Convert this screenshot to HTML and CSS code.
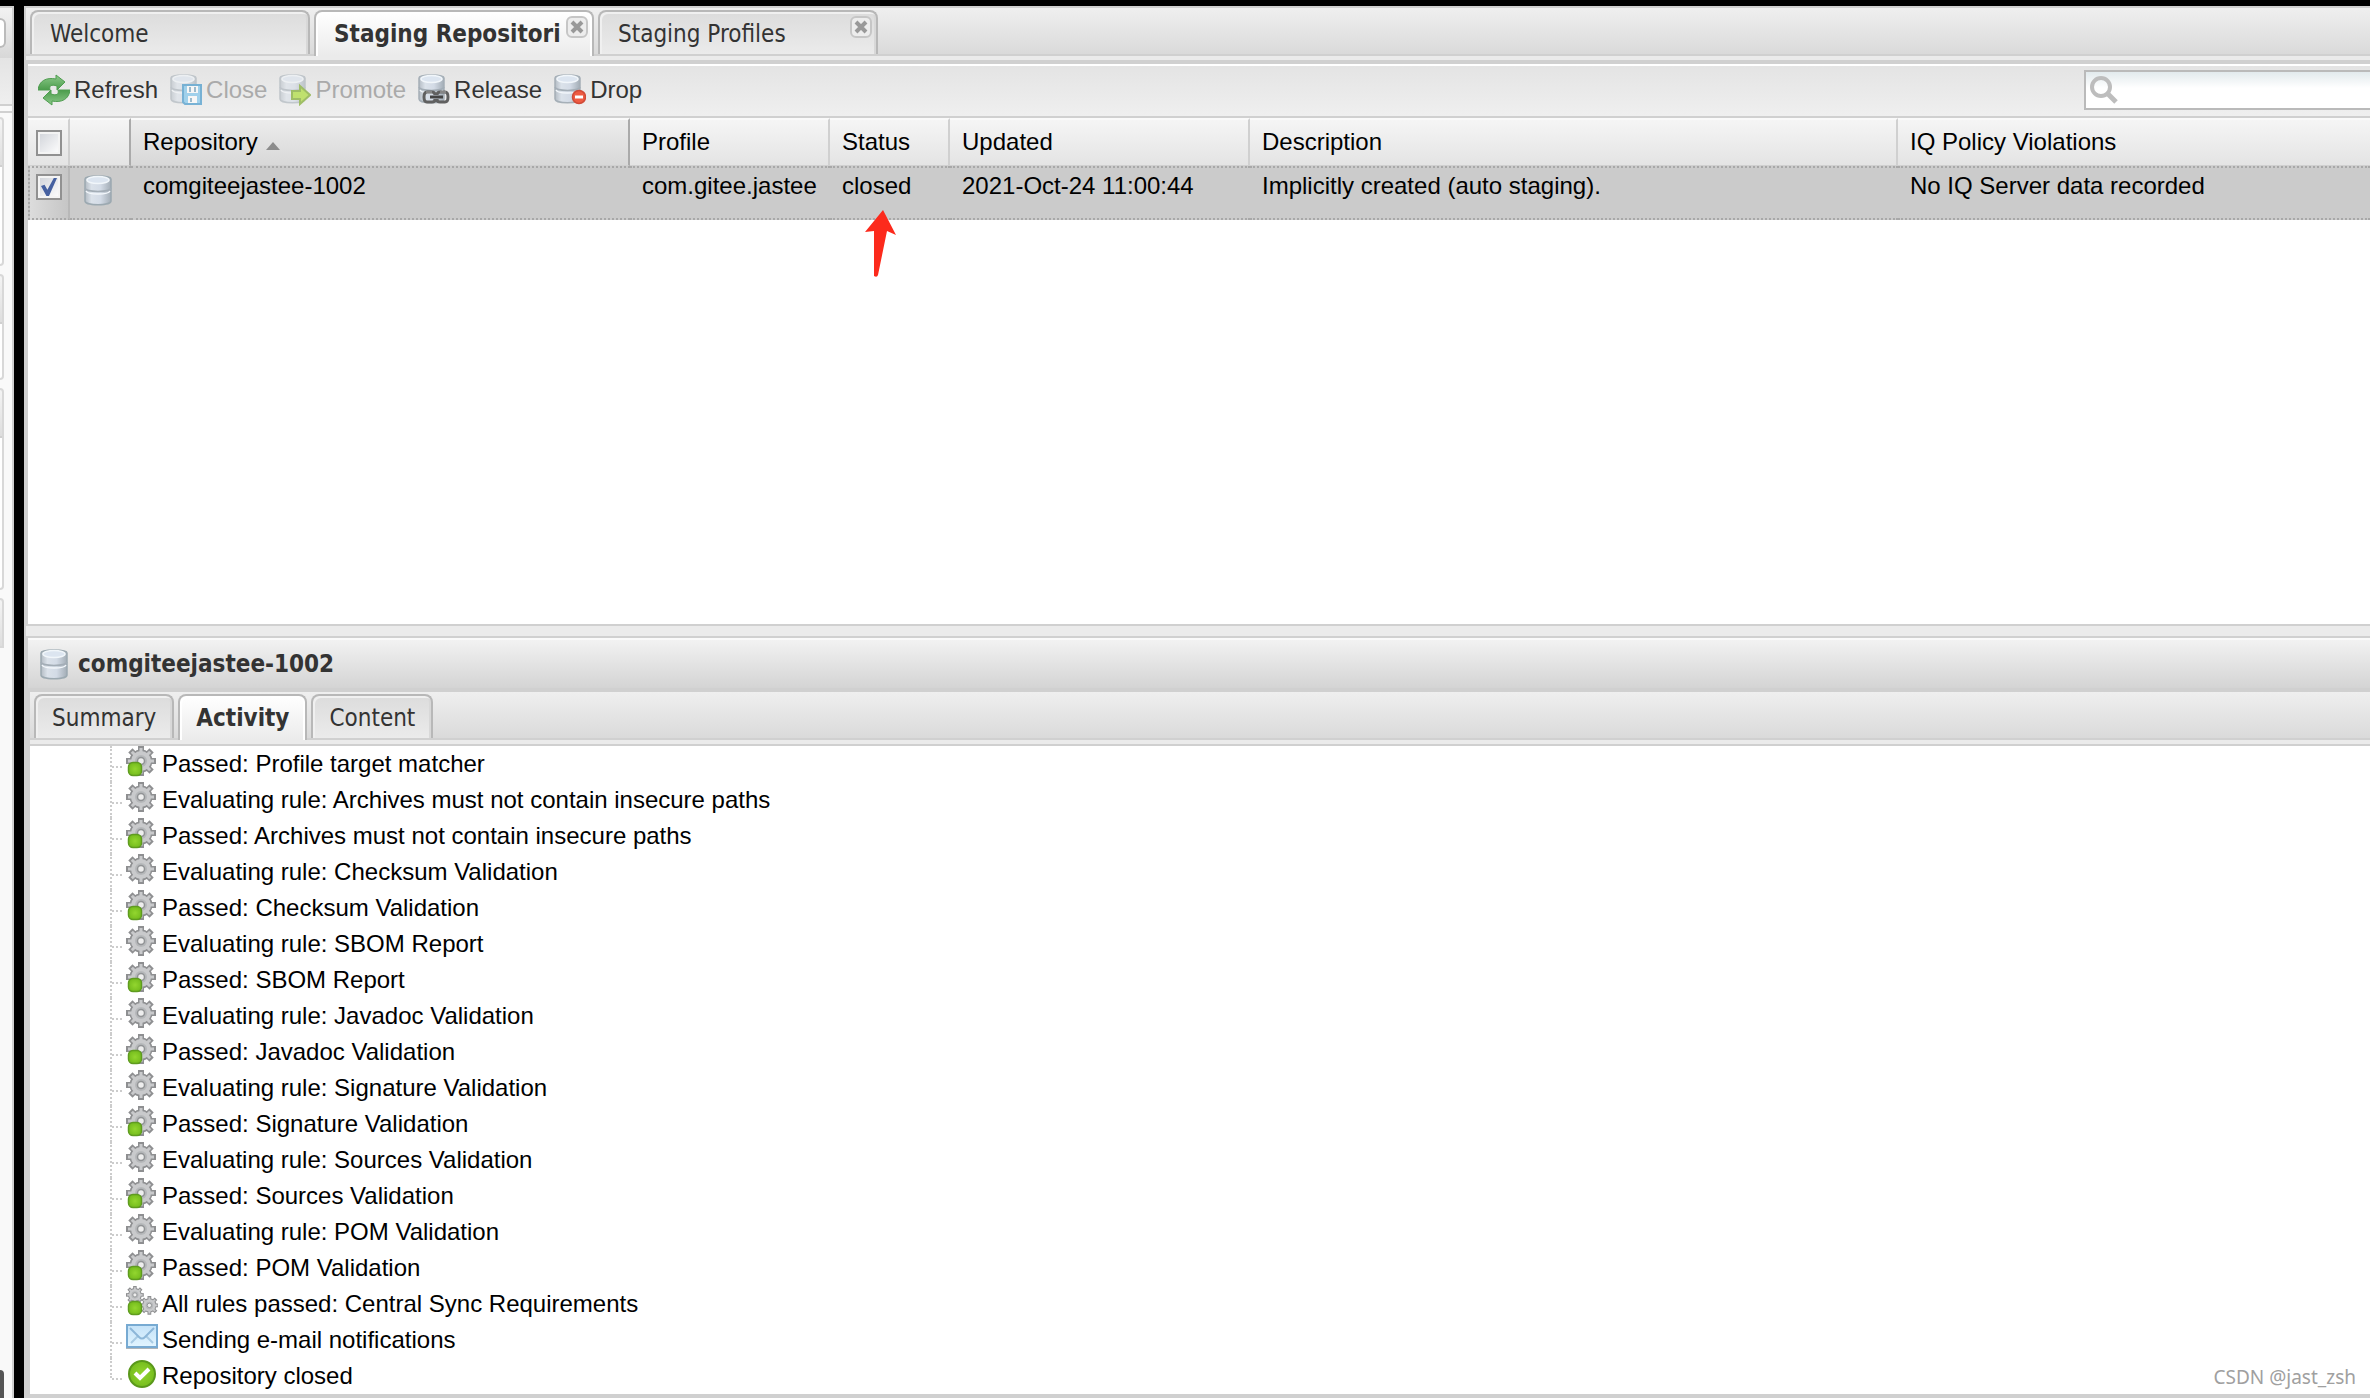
FILE: index.html
```
<!DOCTYPE html>
<html lang="en">

<head>
    <meta charset="UTF-8">
    <meta name="viewport" content="width=device-width, initial-scale=1.0">
    <title>Staging Repositories</title>
    <link rel="stylesheet" href="styles.css">
</head>

<body>

    <!-- Shared icons -->
    <svg class="icon-defs" aria-hidden="true">
        <defs>
            <linearGradient id="metal" x1="0" x2="1" y1="0" y2="0">
                <stop offset="0" stop-color="#b4bcc4" />
                <stop offset="0.25" stop-color="#dbe2ea" />
                <stop offset="0.6" stop-color="#d3dbe6" />
                <stop offset="1" stop-color="#a3adb6" />
            </linearGradient>
            <linearGradient id="leaf" x1="0" x2="0" y1="0" y2="1">
                <stop offset="0" stop-color="#8cc98a" />
                <stop offset="1" stop-color="#4b9c4b" />
            </linearGradient>
            <radialGradient id="green" cx="0.5" cy="0.5" r="0.6">
                <stop offset="0" stop-color="#93d62f" />
                <stop offset="1" stop-color="#70b81a" />
            </radialGradient>
            <linearGradient id="sky" x1="0" x2="0" y1="0" y2="1">
                <stop offset="0" stop-color="#c4e2f8" />
                <stop offset="1" stop-color="#e2f5ff" />
            </linearGradient>
        </defs>

        <symbol id="db" viewBox="0 0 32 32">
            <path d="M2 5C2 1 28 1 28 5V27C28 32 2 32 2 27Z" fill="url(#metal)" stroke="#9ca9b1" stroke-width="1.5" />
            <ellipse cx="15" cy="6" rx="11" ry="3.5" fill="#dce5f0" stroke="#f1f6fa" stroke-width="1.5" />
            <path d="M2 14C3 18.5 27 18.5 28 14" fill="none" stroke="#a3adb6" stroke-width="1.5" />
            <path d="M3 17C5 21 25 21 27 17" fill="none" stroke="#f3f7fb" stroke-width="1.5" />
        </symbol>

        <symbol id="db-small" viewBox="0 0 32 32">
            <path d="M1 4C1 0 26 0 26 4V25C26 30 1 30 1 25Z" fill="url(#metal)" stroke="#a5afb7" stroke-width="1.5" />
            <ellipse cx="13.5" cy="5" rx="10.5" ry="3.5" fill="#dce5f0" stroke="#f1f6fa" stroke-width="1.5" />
            <path d="M1 13C2 17.5 25 17.5 26 13" fill="none" stroke="#a3adb6" stroke-width="1.5" />
            <path d="M2 16C4 20 23 20 25 16" fill="none" stroke="#f3f7fb" stroke-width="1.5" />
        </symbol>

        <symbol id="refresh" viewBox="0 0 32 32">
            <g fill="url(#leaf)" stroke="#4f9d50" stroke-width="1">
                <path d="M0 16C1 7 8 3 18 5L18 1L27 8L19 16V12C13 10 11 12 12 16Z" />
                <path d="M0 16C1 7 8 3 18 5L18 1L27 8L19 16V12C13 10 11 12 12 16Z" transform="rotate(180 16 16)" />
            </g>
        </symbol>

        <symbol id="gear" viewBox="0 0 32 32">
            <g fill="#8e8f91">
                <circle cx="15" cy="15" r="11.5" />
                <path d="M12 0H18V30H12Z" />
                <path d="M12 0H18V30H12Z" transform="rotate(45 15 15)" />
                <path d="M12 0H18V30H12Z" transform="rotate(90 15 15)" />
                <path d="M12 0H18V30H12Z" transform="rotate(135 15 15)" />
            </g>
            <g fill="#c9cacc">
                <circle cx="15" cy="15" r="10" />
                <path d="M13.5 2H16.5V28H13.5Z" />
                <path d="M13.5 2H16.5V28H13.5Z" transform="rotate(45 15 15)" />
                <path d="M13.5 2H16.5V28H13.5Z" transform="rotate(90 15 15)" />
                <path d="M13.5 2H16.5V28H13.5Z" transform="rotate(135 15 15)" />
            </g>
            <circle cx="15" cy="15" r="6" fill="#b6b8ba" />
            <circle cx="15" cy="15" r="3.5" fill="#eee" stroke="#919395" stroke-width="1.5" />
        </symbol>

        <symbol id="gear-ok" viewBox="0 0 32 32">
            <use href="#gear" width="32" height="32" />
            <rect x="2.5" y="16.5" width="13" height="13" rx="4.5" fill="url(#green)" stroke="#5f9b20" stroke-width="1.5" />
        </symbol>

        <symbol id="gears-ok" viewBox="0 0 32 32">
            <use href="#gear" width="19" height="19" />
            <use href="#gear" x="14" y="10" width="20" height="20" />
            <rect x="2.5" y="15.5" width="13" height="13" rx="4.5" fill="url(#green)" stroke="#5f9b20" stroke-width="1.5" />
        </symbol>

        <symbol id="mail" viewBox="0 0 32 32">
            <path d="M0 26H32" stroke="#aeb4b8" stroke-width="2" />
            <rect x="1" y="3" width="30" height="22" fill="url(#sky)" stroke="#77aad2" stroke-width="2" />
            <path d="M5 21L12 14M27 21L20 14" stroke="#a9cbe4" stroke-width="2" fill="none" />
            <path d="M4 6L13 15Q16 18 19 15L28 6" stroke="#8db7d8" stroke-width="2" fill="none" />
        </symbol>

        <symbol id="done" viewBox="0 0 32 32">
            <circle cx="16" cy="16" r="13" fill="url(#green)" stroke="#5a981b" stroke-width="2" />
            <path d="M9 15L14 20L23 11" fill="none" stroke="#fff" stroke-width="4" />
        </symbol>

        <symbol id="close-x" viewBox="0 0 22 22">
            <rect x="1" y="1" width="20" height="20" rx="5" fill="#ededed" stroke="#c6c6c6" stroke-width="2" />
            <path d="M6 6L16 16M16 6L6 16" stroke="#999" stroke-width="4" />
        </symbol>
    </svg>

    <aside class="sidebar">
        <div class="side-header"><span class="side-button"></span></div>
        <div class="side-bar"></div>
        <div class="side-panels">
            <div class="side-panel side-panel-medium"></div>
            <div class="side-panel side-panel-small"></div>
            <div class="side-panel side-panel-large"></div>
            <div class="side-panel side-panel-closed"></div>
        </div>
        <div class="side-handle"></div>
    </aside>

    <main class="main">
        <nav class="tabs main-tabs" aria-label="Views">
            <div class="tab"><button type="button">Welcome</button></div>
            <div class="tab active">
                <button type="button">Staging Repositori</button>
                <button type="button" class="tab-close" aria-label="Close tab"><svg><use href="#close-x" /></svg></button>
            </div>
            <div class="tab">
                <button type="button">Staging Profiles</button>
                <button type="button" class="tab-close" aria-label="Close tab"><svg><use href="#close-x" /></svg></button>
            </div>
        </nav>

        <section class="grid-panel">
            <div class="toolbar">
                <button type="button"><svg class="icon"><use href="#refresh" /></svg>Refresh</button>
                <button type="button" disabled>
                    <svg class="icon" viewBox="0 0 32 32">
                        <use href="#db-small" width="32" height="32" />
                        <path d="M13 11H31V30H15L13 28Z" fill="#6fc0ec" stroke="#2c8cc6" stroke-width="2" />
                        <path d="M17 12H28V19H17ZM18 22H27V29H18Z" fill="#fff" />
                        <path d="M20 13V18M25 13V18M21 24V28" stroke="#6a9cba" stroke-width="2" />
                    </svg>Close
                </button>
                <button type="button" disabled>
                    <svg class="icon" viewBox="0 0 32 32">
                        <use href="#db-small" width="32" height="32" />
                        <path d="M13 17H21V12L31 21L21 30V25H13Z" fill="#a4dc1c" stroke="#6da010" stroke-width="2" />
                    </svg>Promote
                </button>
                <button type="button">
                    <svg class="icon" viewBox="0 0 32 32">
                        <use href="#db-small" width="32" height="32" />
                        <g fill="none" stroke="#606060" stroke-width="3">
                            <path d="M14 28H9Q6 28 6 23Q6 18 9 18H14Q17 18 17 21M22 28H27Q30 28 30 23Q30 18 27 18H22Q19 18 19 21" />
                            <path d="M17 25Q17 28 14 28M19 25Q19 28 22 28" />
                            <path d="M12 23H25" stroke="#444" />
                        </g>
                        <path d="M8 18H14M22 18H28" stroke="#aaa" />
                    </svg>Release
                </button>
                <button type="button">
                    <svg class="icon" viewBox="0 0 32 32">
                        <use href="#db-small" width="32" height="32" />
                        <circle cx="25" cy="23" r="6.5" fill="#ee5b42" stroke="#cf4a37" stroke-width="1.5" />
                        <path d="M21 23H29" stroke="#fff" stroke-width="3" />
                    </svg>Drop
                </button>
                <label class="search">
                    <svg viewBox="0 0 28 28">
                        <circle cx="11" cy="11" r="9" fill="none" stroke="#bdbdbd" stroke-width="4" />
                        <path d="M18 18L26 26" stroke="#bdbdbd" stroke-width="5" />
                    </svg>
                    <input type="text" aria-label="Search">
                </label>
            </div>

            <table class="grid">
                <colgroup>
                    <col class="col-check">
                    <col class="col-icon">
                    <col class="col-repository">
                    <col class="col-profile">
                    <col class="col-status">
                    <col class="col-updated">
                    <col class="col-description">
                    <col>
                </colgroup>
                <thead>
                    <tr>
                        <th class="check-cell"><input type="checkbox" aria-label="Select all"></th>
                        <th class="before-sorted"></th>
                        <th class="sorted">Repository<span class="sort-arrow"></span></th>
                        <th>Profile</th>
                        <th>Status</th>
                        <th>Updated</th>
                        <th>Description</th>
                        <th>IQ Policy Violations</th>
                    </tr>
                </thead>
                <tbody>
                    <tr>
                        <td class="check-cell"><input type="checkbox" aria-label="Select comgiteejastee-1002" checked></td>
                        <td class="icon-cell"><svg class="icon"><use href="#db" /></svg></td>
                        <td>comgiteejastee-1002</td>
                        <td>com.gitee.jastee</td>
                        <td class="status-cell">closed
                            <svg class="pointer" viewBox="0 0 32 68">
                                <path d="M18 0L31 25L22 21L13 65Q12 68 9 66V21L0 22Z" fill="#fc2a1c" />
                            </svg>
                        </td>
                        <td>2021-Oct-24 11:00:44</td>
                        <td>Implicitly created (auto staging).</td>
                        <td>No IQ Server data recorded</td>
                    </tr>
                </tbody>
            </table>
        </section>

        <section class="detail-panel">
            <h2><svg class="icon"><use href="#db" /></svg>comgiteejastee-1002</h2>
            <nav class="tabs detail-tabs" aria-label="Repository details">
                <div class="tab"><button type="button">Summary</button></div>
                <div class="tab active"><button type="button">Activity</button></div>
                <div class="tab"><button type="button">Content</button></div>
            </nav>
            <ul class="tree">
                <li><span class="elbow"></span><svg class="icon"><use href="#gear-ok" /></svg>Passed: Profile target matcher</li>
                <li><span class="elbow"></span><svg class="icon"><use href="#gear" /></svg>Evaluating rule: Archives must not contain insecure paths</li>
                <li><span class="elbow"></span><svg class="icon"><use href="#gear-ok" /></svg>Passed: Archives must not contain insecure paths</li>
                <li><span class="elbow"></span><svg class="icon"><use href="#gear" /></svg>Evaluating rule: Checksum Validation</li>
                <li><span class="elbow"></span><svg class="icon"><use href="#gear-ok" /></svg>Passed: Checksum Validation</li>
                <li><span class="elbow"></span><svg class="icon"><use href="#gear" /></svg>Evaluating rule: SBOM Report</li>
                <li><span class="elbow"></span><svg class="icon"><use href="#gear-ok" /></svg>Passed: SBOM Report</li>
                <li><span class="elbow"></span><svg class="icon"><use href="#gear" /></svg>Evaluating rule: Javadoc Validation</li>
                <li><span class="elbow"></span><svg class="icon"><use href="#gear-ok" /></svg>Passed: Javadoc Validation</li>
                <li><span class="elbow"></span><svg class="icon"><use href="#gear" /></svg>Evaluating rule: Signature Validation</li>
                <li><span class="elbow"></span><svg class="icon"><use href="#gear-ok" /></svg>Passed: Signature Validation</li>
                <li><span class="elbow"></span><svg class="icon"><use href="#gear" /></svg>Evaluating rule: Sources Validation</li>
                <li><span class="elbow"></span><svg class="icon"><use href="#gear-ok" /></svg>Passed: Sources Validation</li>
                <li><span class="elbow"></span><svg class="icon"><use href="#gear" /></svg>Evaluating rule: POM Validation</li>
                <li><span class="elbow"></span><svg class="icon"><use href="#gear-ok" /></svg>Passed: POM Validation</li>
                <li><span class="elbow"></span><svg class="icon"><use href="#gears-ok" /></svg>All rules passed: Central Sync Requirements</li>
                <li><span class="elbow"></span><svg class="icon"><use href="#mail" /></svg>Sending e-mail notifications</li>
                <li><span class="elbow"></span><svg class="icon"><use href="#done" /></svg>Repository closed</li>
            </ul>
        </section>
    </main>

    <div class="watermark">CSDN @jast_zsh</div>

</body>

</html>
```
FILE: styles.css
```
* {
    box-sizing: border-box;
}

body {
    font-family: "Liberation Sans", Arial, sans-serif;
    font-size: 24px;
    line-height: 36px;
    color: #000;
    background-color: #000;
    margin: 0;
    padding-top: 6px;
    min-height: 100vh;
    display: flex;
    gap: 10px;
    position: relative;
    overflow-x: hidden;
}

button {
    font: inherit;
    color: #333;
    background: none;
    border: none;
    padding: 0;
    cursor: pointer;
}

.icon-defs {
    position: absolute;
    width: 0;
    height: 0;
}

.icon {
    width: 32px;
    height: 32px;
    flex: none;
    display: block;
}

/* Sidebar */
.sidebar {
    width: 14px;
    flex: none;
    display: flex;
    flex-direction: column;
    background-color: #f9f9f9;
    border-top: 2px solid #d0d0d0;
    border-right: 2px solid #d0d0d0;
}

.side-header {
    height: 50px;
    padding-top: 10px;
    background: linear-gradient(#f2f2f2, #d8d8d8);
}

.side-button {
    display: block;
    width: 6px;
    height: 30px;
    background-color: #fff;
    border: 2px solid #bbb;
    border-left: none;
    border-radius: 0 8px 8px 0;
}

.side-bar {
    height: 55px;
    background: linear-gradient(#e4e4e4, #efefef 46px, #d0d0d0 46px, #d0d0d0 48px, #f9f9f9 48px, #f9f9f9 53px, #d0d0d0 53px);
}

.side-panels {
    display: flex;
    flex-direction: column;
    gap: 8px;
    padding-top: 4px;
    flex: 1;
}

.side-panel {
    width: 4px;
    border: 2px solid #d8d8d8;
    border-left: none;
    border-radius: 0 6px 6px 0;
    background: linear-gradient(#f4f4f4, #dedede 46px, #d0d0d0 46px, #d0d0d0 48px, #fff 48px);
}

.side-panel-medium {
    height: 149px;
}

.side-panel-small {
    height: 106px;
}

.side-panel-large {
    height: 202px;
}

.side-panel-closed {
    height: 50px;
    border-radius: 0 6px 0 0;
}

.side-handle {
    width: 4px;
    height: 28px;
    background-color: #555;
    border-radius: 0 6px 0 0;
}

/* Main area */
.main {
    flex: 1;
    min-width: 0;
    display: flex;
    flex-direction: column;
    background-color: #ebebeb;
    border-top: 2px solid #d0d0d0;
    border-left: 2px solid #d0d0d0;
}

/* Tabs */
.tabs {
    font-family: "DejaVu Sans Condensed", "Noto Sans", Tahoma, sans-serif;
    display: flex;
    align-items: flex-start;
    gap: 4px;
    height: 52px;
    padding: 2px 4px 0;
    background: linear-gradient(#efefef, #dadada 46px, #d0d0d0 46px, #d0d0d0 48px, #ebebeb 48px);
}

.tab {
    display: flex;
    justify-content: space-between;
    align-items: flex-start;
    height: 44px;
    padding: 4px 4px 0 18px;
    background: linear-gradient(#dcdcdc, #ebebeb);
    border: 2px solid #b8b8b8;
    border-bottom: none;
    border-radius: 8px 8px 0 0;
    box-shadow: inset 2px 2px 0 #f0f0f0, inset -2px 0 0 #d8d8d8;
}

.tab.active {
    height: 46px;
    font-weight: bold;
    background: linear-gradient(#fff, #ebebeb);
    box-shadow: inset 2px 2px 0 #fff, inset -2px 0 0 #fff;
}

.tab button {
    line-height: 36px;
    white-space: nowrap;
}

.tab .tab-close {
    line-height: 0;
}

.tab-close svg {
    width: 22px;
    height: 22px;
}

.main-tabs .tab {
    width: 280px;
}

.detail-tabs {
    border-left: 2px solid #d0d0d0;
}

.detail-tabs .tab {
    padding-left: 16px;
    padding-right: 16px;
}

/* Repository grid */
.grid-panel {
    flex: 1;
    background-color: #fff;
    border-top: 4px solid #d0d0d0;
    border-left: 2px solid #d0d0d0;
    border-bottom: 2px solid #d0d0d0;
    margin-bottom: 10px;
}

.toolbar {
    display: flex;
    align-items: center;
    gap: 12px;
    height: 54px;
    padding: 0 0 2px 10px;
    background: linear-gradient(#e4e4e4, #efefef);
    border-top: 2px solid #fff;
    border-bottom: 2px solid #d0d0d0;
}

.toolbar button {
    display: flex;
    align-items: center;
    gap: 4px;
}

.toolbar button:disabled {
    color: #aaa;
}

.toolbar button:disabled .icon {
    opacity: 0.6;
}

.search {
    display: flex;
    align-items: center;
    width: 286px;
    height: 40px;
    margin-left: auto;
    padding-left: 4px;
    background: linear-gradient(#e2eaed, #fff 16px);
    border: 2px solid #bababa;
    border-right: none;
}

.search svg {
    width: 28px;
    height: 28px;
    flex: none;
}

.search input {
    font: inherit;
    flex: 1;
    min-width: 0;
    border: none;
    outline: none;
    background: none;
}

.grid {
    width: 100%;
    table-layout: fixed;
    border-collapse: separate;
    border-spacing: 0;
}

.col-check {
    width: 42px;
}

.col-icon {
    width: 61px;
}

.col-repository {
    width: 499px;
}

.col-profile {
    width: 200px;
}

.col-status {
    width: 120px;
}

.col-updated {
    width: 300px;
}

.col-description {
    width: 648px;
}

.grid th,
.grid td {
    text-align: left;
    font-weight: normal;
    white-space: nowrap;
    padding: 0 0 2px 12px;
}

.grid th {
    height: 48px;
    background: linear-gradient(#f5f5f5, #e4e4e4);
    border-top: 2px solid #fafafa;
    border-right: 2px solid #d0d0d0;
    border-bottom: 1px solid #d0d0d0;
}

.grid th:last-child {
    border-right: none;
}

.grid th.before-sorted {
    border-right-color: #aaa;
}

.grid th.sorted {
    background: linear-gradient(#ececec, #d8d8d8);
    border-right-color: #aaa;
}

.sort-arrow {
    display: inline-block;
    margin-left: 8px;
    border: 7px solid transparent;
    border-top: none;
    border-bottom: 8px solid #8c8c8c;
}

.grid td {
    height: 54px;
    vertical-align: top;
    background-color: #cbcbcb;
    border-top: 2px dotted #a8a8a8;
    border-bottom: 2px dotted #a8a8a8;
}

.grid .check-cell {
    padding: 0 0 0 8px;
}

.grid td.check-cell {
    padding: 6px 0 0 6px;
    background: linear-gradient(to right, #dcdcdc, #c6c6c6);
    border-left: 2px dotted #a8a8a8;
    border-right: 2px solid #b8b8b8;
}

.grid .icon-cell {
    padding: 6px 0 0 13px;
}

.status-cell {
    position: relative;
}

/* Lies over the row and the empty area under it */
.pointer {
    position: absolute;
    left: 35px;
    top: 42px;
    width: 32px;
    height: 68px;
}

.grid input {
    appearance: none;
    display: block;
    width: 26px;
    height: 26px;
    margin: 0;
    background: linear-gradient(135deg, #cfd2d8, #fff);
    border: 2px solid #919191;
    box-shadow: inset 0 0 0 2px #f4f4f4;
}

.grid input:checked::after {
    content: "";
    display: block;
    width: 16px;
    height: 18px;
    margin: 2px 3px;
    background-color: #4560a0;
    clip-path: polygon(0 45%, 22% 38%, 40% 65%, 80% 0, 100% 0, 50% 100%, 34% 100%);
}

/* Details of the selected repository */
.detail-panel {
    background-color: #fff;
    border: 2px solid #d0d0d0;
    border-right: none;
    border-bottom-width: 4px;
}

.detail-panel h2 {
    display: flex;
    align-items: center;
    gap: 7px;
    height: 54px;
    margin: 0;
    padding-left: 11px;
    font-family: "DejaVu Sans Condensed", "Noto Sans", Tahoma, sans-serif;
    font-size: 24px;
    color: #333;
    background: linear-gradient(#f2f2f2, #d4d4d4);
    border-top: 2px solid #fafafa;
    border-bottom: 4px solid #d0d0d0;
}

.tree {
    list-style: none;
    margin: 0;
    padding: 0 0 0 80px;
    border-top: 2px solid #d0d0d0;
    border-left: 2px solid #d0d0d0;
}

.tree li {
    display: flex;
    gap: 4px;
    height: 36px;
}

.elbow {
    width: 12px;
    border-left: 2px dotted #ccc;
}

.elbow::before {
    content: "";
    display: block;
    height: 20px;
    border-bottom: 2px dotted #ccc;
}

.tree li:last-child .elbow {
    height: 20px;
}

.watermark {
    position: absolute;
    right: 14px;
    bottom: 8px;
    font-family: "Noto Sans", sans-serif;
    font-size: 19px;
    line-height: 26px;
    color: #a0a0a0;
}
```
